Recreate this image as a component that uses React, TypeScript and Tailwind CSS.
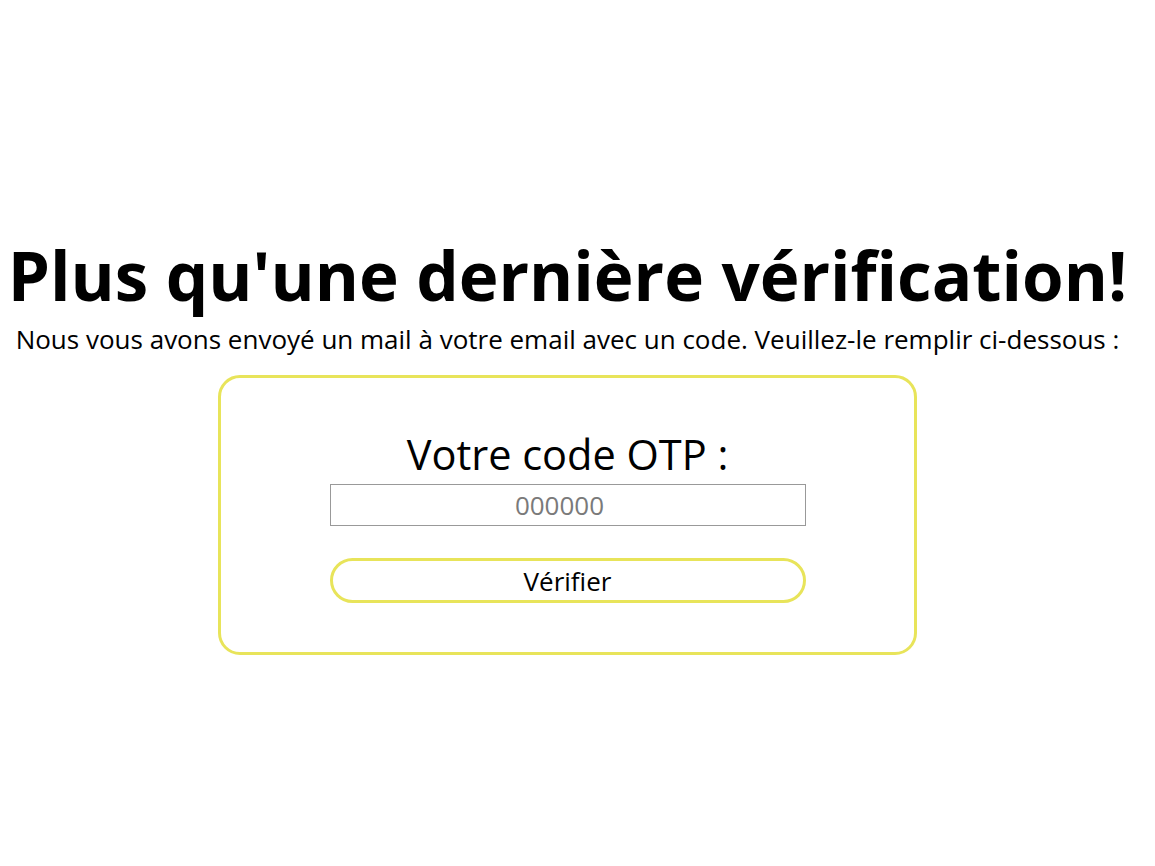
export default function App() {
  return (
    <div className="min-h-[866px] w-[1135px] bg-white pt-[235px] text-black" style={{ fontFamily: '"Open Sans", sans-serif' }}>
      <div className="flex flex-col items-center">
        <h1 className="whitespace-nowrap text-[67.3px] font-bold leading-[80px]">Plus qu'une dernière vérification!</h1>
        <p className="mt-[7px] whitespace-nowrap text-[26px] leading-[35px]">Nous vous avons envoyé un mail à votre email avec un code. Veuillez-le remplir ci-dessous :</p>
        <div className="mt-[18px] flex h-[280px] w-[699px] flex-col items-center rounded-[22px] border-[3px] border-[#e8e45a] pt-[48px]">
          <div className="text-[41.5px] leading-[56px]">Votre code OTP :</div>
          <input
            className="mt-[2px] h-[42px] w-[476px] border border-[#999] pr-[16px] text-center text-[26px] placeholder-[#7a7a7a] outline-none"
            placeholder="000000"
          />
          <button className="mt-[32px] h-[45px] w-[476px] rounded-full border-[3px] border-[#e8e45a] text-[26px] leading-none">
            Vérifier
          </button>
        </div>
      </div>
    </div>
  );
}
